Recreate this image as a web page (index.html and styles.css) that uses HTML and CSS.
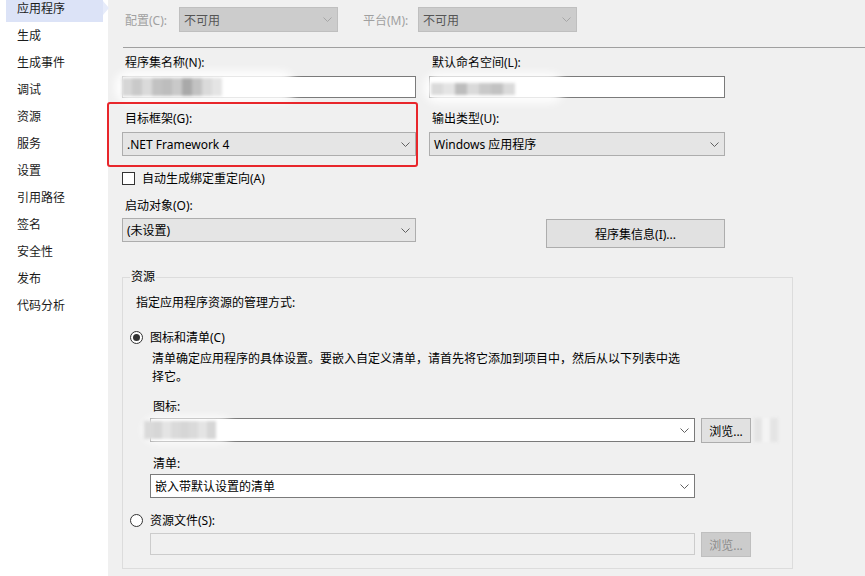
FILE: index.html
```html
<!DOCTYPE html>
<html lang="zh-CN">
<head>
    <meta charset="UTF-8">
    <title>应用程序 - 项目属性</title>
    <link rel="stylesheet" href="styles.css">
</head>
<body>
    <div class="app">
        <nav class="sidebar">
            <div class="nav-list">
                <a class="nav-item active">应用程序</a>
                <a class="nav-item">生成</a>
                <a class="nav-item">生成事件</a>
                <a class="nav-item">调试</a>
                <a class="nav-item">资源</a>
                <a class="nav-item">服务</a>
                <a class="nav-item">设置</a>
                <a class="nav-item">引用路径</a>
                <a class="nav-item">签名</a>
                <a class="nav-item">安全性</a>
                <a class="nav-item">发布</a>
                <a class="nav-item">代码分析</a>
            </div>
        </nav>

        <main class="page">
            <div class="config-bar">
                <span class="config-label">配置(C):</span>
                <div class="combo disabled"><span>不可用</span><svg class="chev" width="9" height="5" viewBox="0 0 9 5"><polyline points="0.5,0.5 4.5,4.5 8.5,0.5"/></svg></div>
                <span class="config-label second">平台(M):</span>
                <div class="combo disabled"><span>不可用</span><svg class="chev" width="9" height="5" viewBox="0 0 9 5"><polyline points="0.5,0.5 4.5,4.5 8.5,0.5"/></svg></div>
            </div>
            <hr class="divider">

            <div class="row first">
                <div class="field">
                    <label class="field-label">程序集名称(N):</label>
                    <div class="textbox">
                        <div class="smudge wide"></div>
                        <div class="mosaic">
                            <span class="px c1"></span><span class="px c2"></span><span class="px c3"></span><span class="px c4"></span><span class="px c5"></span><span class="px c2"></span><span class="px c6"></span><span class="px c4"></span><span class="px c3"></span><span class="px c7"></span>
                        </div>
                    </div>
                </div>
                <div class="field">
                    <label class="field-label">默认命名空间(L):</label>
                    <div class="textbox">
                        <div class="smudge narrow"></div>
                        <div class="mosaic small">
                            <span class="px c3"></span><span class="px c7"></span><span class="px c5"></span><span class="px c3"></span><span class="px c2"></span><span class="px c4"></span><span class="px c3"></span>
                        </div>
                    </div>
                </div>
            </div>

            <div class="row">
                <div class="field marked">
                    <label class="field-label">目标框架(G):</label>
                    <div class="combo"><span>.NET Framework 4</span><svg class="chev" width="9" height="5" viewBox="0 0 9 5"><polyline points="0.5,0.5 4.5,4.5 8.5,0.5"/></svg></div>
                    <div class="highlight-box"></div>
                </div>
                <div class="field">
                    <label class="field-label">输出类型(U):</label>
                    <div class="combo"><span>Windows 应用程序</span><svg class="chev" width="9" height="5" viewBox="0 0 9 5"><polyline points="0.5,0.5 4.5,4.5 8.5,0.5"/></svg></div>
                </div>
            </div>

            <div class="check-row">
                <span class="checkbox"></span>
                <span>自动生成绑定重定向(A)</span>
            </div>

            <div class="row startup">
                <div class="field">
                    <label class="field-label">启动对象(O):</label>
                    <div class="combo"><span>(未设置)</span><svg class="chev" width="9" height="5" viewBox="0 0 9 5"><polyline points="0.5,0.5 4.5,4.5 8.5,0.5"/></svg></div>
                </div>
                <div class="field">
                    <button class="btn info-btn">程序集信息(I)...</button>
                </div>
            </div>

            <fieldset class="group">
                <legend>资源</legend>
                <p class="intro">指定应用程序资源的管理方式:</p>

                <div class="radio-row">
                    <span class="radio checked"></span>
                    <span>图标和清单(C)</span>
                </div>
                <div class="indent">
                    <p class="description">清单确定应用程序的具体设置。要嵌入自定义清单，请首先将它添加到项目中，然后从以下列表中选择它。</p>

                    <label class="sub-label">图标:</label>
                    <div class="combo-row icon-row">
                        <div class="combo white">
                            <span></span><svg class="chev" width="9" height="5" viewBox="0 0 9 5"><polyline points="0.5,0.5 4.5,4.5 8.5,0.5"/></svg>
                            <div class="smudge icon"></div>
                            <div class="mosaic icon-mosaic">
                                <span class="px c3"></span><span class="px c1"></span><span class="px c7"></span><span class="px c3"></span><span class="px c1"></span><span class="px c3"></span><span class="px c7"></span><span class="px c1"></span>
                            </div>
                        </div>
                        <button class="btn small">浏览...</button>
                        <div class="mosaic side">
                            <span class="px c7"></span><span class="px c8"></span><span class="px c7"></span>
                        </div>
                    </div>

                    <label class="sub-label manifest">清单:</label>
                    <div class="combo white manifest-combo"><span>嵌入带默认设置的清单</span><svg class="chev" width="9" height="5" viewBox="0 0 9 5"><polyline points="0.5,0.5 4.5,4.5 8.5,0.5"/></svg></div>
                </div>

                <div class="radio-row second">
                    <span class="radio"></span>
                    <span>资源文件(S):</span>
                </div>
                <div class="indent">
                    <div class="combo-row file-row">
                        <div class="textbox disabled"></div>
                        <button class="btn small disabled">浏览...</button>
                    </div>
                </div>
            </fieldset>
        </main>
    </div>
</body>
</html>
```

FILE: styles.css
```css
* {
    margin: 0;
    padding: 0;
    box-sizing: border-box;
}

body {
    font-family: "Noto Sans", "Noto Sans CJK SC", sans-serif;
    font-size: 12px;
    color: #000;
    background: #f0f0f0;
}

.app {
    display: flex;
    height: 576px;
    overflow: hidden;
}

/* left navigation */
.sidebar {
    width: 108px;
    flex-shrink: 0;
    background: #fff;
}

.nav-list {
    margin-top: -5px;
}

.nav-item {
    display: block;
    width: 97px;
    height: 27px;
    line-height: 27px;
    margin-left: 6px;
    padding-left: 11px;
    color: #1b1b1b;
}

.nav-item.active {
    position: relative;
    background: #dce3f7;
}

.nav-item.active::after {
    content: "";
    position: absolute;
    left: 97px;
    top: 6px;
    border-left: 6px solid #e6ebfa;
    border-top: 7px solid transparent;
    border-bottom: 7px solid transparent;
}

/* main page */
.page {
    flex: 1;
    padding-left: 14px;
}

.config-bar {
    display: flex;
    align-items: center;
    height: 25px;
    margin-top: 7px;
    color: #a0a0a0;
}

.config-label {
    width: 57px;
    padding-left: 3px;
}

.config-label.second {
    width: 58px;
    margin-left: 22px;
}

.divider {
    height: 1px;
    border: 0;
    background: #a0a0a0;
    margin: 15px 0 0 1px;
}

.combo {
    position: relative;
    display: flex;
    align-items: center;
    justify-content: space-between;
    height: 24px;
    padding: 0 5px 0 4px;
    background: #e5e5e5;
    border: 1px solid #adadad;
    white-space: nowrap;
}

.combo .chev polyline {
    fill: none;
    stroke: #606060;
    stroke-width: 1;
}

.combo.disabled {
    width: 159px;
    height: 25px;
    background: #cccccc;
    border-color: #bfbfbf;
    color: #555;
}

.combo.disabled .chev polyline {
    stroke: #a6a6a6;
}

.combo.white {
    width: 545px;
    background: #fff;
    border-color: #7a7a7a;
}

.row {
    display: grid;
    grid-template-columns: 294px 296px;
    column-gap: 13px;
    margin-top: 13px;
}

.row.first {
    margin-top: 7px;
}

.field {
    position: relative;
}

.field-label {
    display: block;
    height: 16px;
    line-height: 16px;
    padding-left: 3px;
}

.field .combo {
    margin-top: 5px;
}

.textbox {
    position: relative;
    height: 22px;
    margin-top: 5px;
    background: #fff;
    border: 1px solid #7a7a7a;
}

.textbox.disabled {
    width: 545px;
    margin-top: 1px;
    background: #f0f0f0;
    border-color: #cccccc;
}

.highlight-box {
    position: absolute;
    top: -9px;
    left: -15px;
    right: -2px;
    bottom: -11px;
    border: 2px solid #e8262b;
    border-radius: 3px;
}

.check-row {
    display: flex;
    align-items: center;
    gap: 7px;
    height: 16px;
    margin-top: 14px;
}

.checkbox {
    width: 13px;
    height: 13px;
    background: #fff;
    border: 1px solid #333;
}

.row.startup {
    margin-top: 12px;
}

.row.startup .combo {
    margin-top: 4px;
}

.btn {
    font-family: inherit;
    font-size: 12px;
    color: #000;
    background: #e1e1e1;
    border: 1px solid #adadad;
}

.info-btn {
    display: block;
    width: 179px;
    height: 29px;
    margin: 21px 0 0 auto;
}

.btn.small {
    width: 50px;
    height: 25px;
    flex-shrink: 0;
}

.btn.disabled {
    background: #cccccc;
    border-color: #bfbfbf;
    color: #8d8d8d;
}

/* resources group */
.group {
    width: 671px;
    margin-top: 21px;
    padding: 0 0 11px 0;
    border: 1px solid #dcdcdc;
}

.group legend {
    margin-left: 7px;
    padding: 0 1px;
    line-height: 16px;
}

.intro {
    margin: 10px 0 0 13px;
    line-height: 16px;
}

.radio-row {
    display: flex;
    align-items: center;
    gap: 7px;
    height: 16px;
    margin: 18px 0 0 7px;
}

.radio-row.second {
    margin-top: 14px;
}

.radio {
    display: flex;
    align-items: center;
    justify-content: center;
    width: 13px;
    height: 13px;
    border: 1px solid #333;
    border-radius: 50%;
    background: #fff;
}

.radio.checked::after {
    content: "";
    width: 7px;
    height: 7px;
    border-radius: 50%;
    background: #333;
}

.indent {
    margin-left: 27px;
}

.description {
    width: 537px;
    margin-top: 5px;
    padding-left: 2px;
    line-height: 18px;
}

.sub-label {
    display: block;
    margin-top: 13px;
    padding-left: 3px;
    line-height: 16px;
}

.sub-label.manifest {
    margin-top: 13px;
}

.combo-row {
    position: relative;
    display: flex;
    gap: 6px;
    margin-top: 3px;
}

.combo-row.file-row {
    margin-top: 4px;
}

.manifest-combo {
    margin-top: 2px;
}

/* blurred-out values */
.smudge {
    position: absolute;
    background: rgba(255, 255, 255, 0.92);
    border-radius: 14px;
    filter: blur(4px);
}

.smudge.wide {
    left: -8px;
    top: -6px;
    width: 180px;
    height: 32px;
}

.smudge.narrow {
    left: -6px;
    top: -4px;
    width: 140px;
    height: 30px;
}

.smudge.icon {
    left: -8px;
    top: -2px;
    width: 90px;
    height: 26px;
}

.mosaic {
    position: absolute;
    left: -1px;
    top: 1px;
    display: flex;
    filter: blur(1.5px);
}

.mosaic .px {
    width: 10px;
    height: 18px;
}

.mosaic.small {
    left: 1px;
    top: 6px;
}

.mosaic.small .px {
    width: 12px;
    height: 12px;
}

.mosaic.icon-mosaic {
    left: -7px;
    top: 2px;
}

.mosaic.icon-mosaic .px {
    width: 9px;
    height: 18px;
}

.mosaic.side {
    left: 604px;
    top: 0;
}

.mosaic.side .px {
    width: 8px;
    height: 24px;
}

.c1 { background: #d6d6d6; }
.c2 { background: #c9c9c9; }
.c3 { background: #dadada; }
.c4 { background: #c2c2c2; }
.c5 { background: #bdbdbd; }
.c6 { background: #a9a9a9; }
.c7 { background: #e4e4e4; }
.c8 { background: #f4f4f4; }
```
